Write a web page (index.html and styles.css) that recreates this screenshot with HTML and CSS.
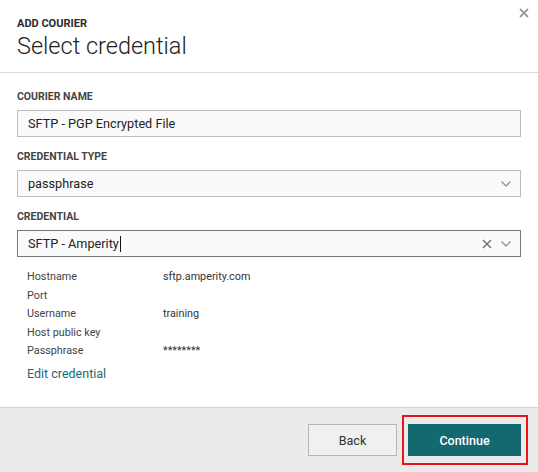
FILE: index.html
```html
<!DOCTYPE html>
<html>
<head>
<meta charset="utf-8">
<link rel="stylesheet" href="styles.css">
</head>
<body>
<div class="modal">
  <div class="header">
    <div class="eyebrow">ADD COURIER</div>
    <h1 class="title">Select credential</h1>
    <span class="close">
      <svg width="10" height="10" viewBox="0 0 10 10"><path d="M1 1L9 9M9 1L1 9" stroke="#9a9a9a" stroke-width="1.8"/></svg>
    </span>
  </div>
  <div class="body">
    <div class="field">
      <div class="label">COURIER NAME</div>
      <div class="input">SFTP - PGP Encrypted File</div>
    </div>
    <div class="field">
      <div class="label">CREDENTIAL TYPE</div>
      <div class="input select">
        <span class="value">passphrase</span>
        <span class="icons">
          <svg width="12" height="8" viewBox="0 0 12 8"><path d="M1.5 1.5L6 6L10.5 1.5" fill="none" stroke="#999" stroke-width="1.5"/></svg>
        </span>
      </div>
    </div>
    <div class="field last">
      <div class="label">CREDENTIAL</div>
      <div class="input select focused">
        <span class="value">SFTP - Amperity<span class="caret"></span></span>
        <span class="icons">
          <svg width="10" height="10" viewBox="0 0 10 10"><path d="M1 1L9 9M9 1L1 9" stroke="#777" stroke-width="1.6"/></svg>
          <svg width="12" height="8" viewBox="0 0 12 8"><path d="M1.5 1.5L6 6L10.5 1.5" fill="none" stroke="#999" stroke-width="1.5"/></svg>
        </span>
      </div>
    </div>
    <div class="details">
      <div class="k">Hostname</div><div class="v">sftp.amperity.com</div>
      <div class="k">Port</div><div class="v"></div>
      <div class="k">Username</div><div class="v">training</div>
      <div class="k">Host public key</div><div class="v"></div>
      <div class="k">Passphrase</div><div class="v">********</div>
    </div>
    <a class="edit">Edit credential</a>
  </div>
  <div class="footer">
    <button class="btn back">Back</button>
    <span class="highlight"><button class="btn primary">Continue</button></span>
  </div>
</div>
</body>
</html>
```
FILE: styles.css
```css
* { box-sizing: border-box; }
html, body { margin: 0; padding: 0; }
body {
  font-family: Roboto, "Liberation Sans", Arial, sans-serif;
  background: #fff;
  width: 538px;
  height: 472px;
  overflow: hidden;
}
.modal {
  display: flex;
  flex-direction: column;
  height: 472px;
}
.header {
  position: relative;
  padding: 17px 17px 0;
  height: 73px;
  border-bottom: 1px solid #d9d9d9;
}
.eyebrow {
  font-size: 11px;
  font-weight: 700;
  color: #2b2b2b;
  line-height: 13px;
}
.title {
  margin: 2px 0 0;
  font-size: 23.5px;
  font-weight: 300;
  color: #222;
  line-height: 28px;
}
.close {
  position: absolute;
  right: 9px;
  top: 8px;
  display: flex;
}
.body {
  flex: 1;
  padding: 18px 17px 0;
}
.field { margin-bottom: 14px; }
.field.last { margin-bottom: 11px; }
.label {
  font-size: 10.5px;
  font-weight: 700;
  color: #444;
  line-height: 12px;
  margin-bottom: 7px;
}
.input {
  height: 27px;
  border: 1px solid #bdbdbd;
  background: #fafafa;
  font-size: 12.7px;
  color: #222;
  padding: 0 10px;
  display: flex;
  align-items: center;
}
.select { justify-content: space-between; padding-right: 8px; }
.focused { border-color: #777; }
.value { display: flex; align-items: center; }
.caret {
  display: inline-block;
  width: 1px;
  height: 16px;
  background: #111;
  margin-left: 1px;
}
.icons { display: flex; align-items: center; gap: 8px; }
.details {
  display: grid;
  grid-template-columns: 136px 1fr;
  grid-auto-rows: 18.5px;
  padding: 0 10px;
  font-size: 10.8px;
  color: #444;
  line-height: 18.5px;
}
.v { color: #333; }
.edit {
  display: block;
  margin: 5px 0 0 10px;
  font-size: 12.5px;
  line-height: 15px;
  color: #1a6a73;
}
.footer {
  height: 65px;
  background: #ebebeb;
  border-top: 1px solid #d4d4d4;
  display: flex;
  justify-content: flex-end;
  align-items: center;
  padding-right: 10px;
  gap: 5px;
}
.btn {
  height: 32px;
  font-family: Roboto, "Liberation Sans", Arial, sans-serif;
  font-size: 12.5px;
  cursor: pointer;
}
.back {
  width: 89px;
  background: #f0f0f0;
  border: 1px solid #b5b5b5;
  color: #333;
}
.highlight {
  display: flex;
  border: 2px solid #e8141b;
  padding: 7px 5px 7px 4px;
}
.primary {
  width: 113px;
  background: #146870;
  border: none;
  color: #fff;
  font-weight: 500;
}
```
